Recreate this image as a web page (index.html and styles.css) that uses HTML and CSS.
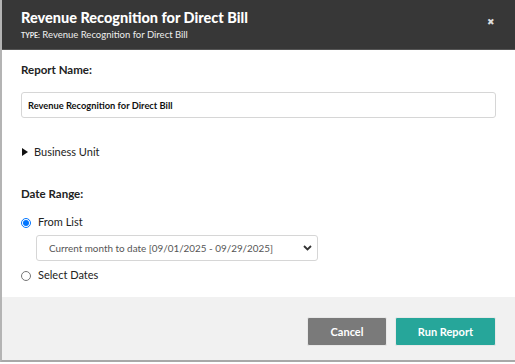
FILE: index.html
```html
<!DOCTYPE html>
<html lang="en">
<head>
    <meta charset="UTF-8">
    <meta name="viewport" content="width=device-width, initial-scale=1.0">
    <title>Revenue Recognition for Direct Bill</title>
    <link rel="stylesheet" href="styles.css">
</head>
<body>
    <div class="dialog">
        <div class="dialog-header">
            <div class="titles">
                <div class="title">Revenue Recognition for Direct Bill</div>
                <div class="subtitle"><span class="type">TYPE:</span> Revenue Recognition for Direct Bill</div>
            </div>
            <span class="close-btn">&#x2716;</span>
        </div>

        <div class="dialog-body">
            <label class="label" for="reportName">Report Name:</label>
            <input type="text" id="reportName" class="text-input" value="Revenue Recognition for Direct Bill">

            <div class="toggle">
                <svg class="caret" width="6" height="8" viewBox="0 0 6 8"><path d="M0 0 L6 4 L0 8 Z" fill="#111"/></svg>
                <span>Business Unit</span>
            </div>

            <div class="label">Date Range:</div>

            <div class="radio-row">
                <input type="radio" id="fromList" name="range" checked>
                <label for="fromList">From List</label>
            </div>
            <div class="select-wrap">
                <select class="select">
                    <option>Current month to date [09/01/2025 - 09/29/2025]</option>
                </select>
                <svg class="chevron" width="9" height="6" viewBox="0 0 9 6"><path d="M1 1 L4.5 4.5 L8 1" fill="none" stroke="#333" stroke-width="1.8"/></svg>
            </div>
            <div class="radio-row">
                <input type="radio" id="selectDates" name="range">
                <label for="selectDates">Select Dates</label>
            </div>
        </div>

        <div class="dialog-footer">
            <button class="button cancel">Cancel</button>
            <button class="button run">Run Report</button>
        </div>
    </div>
</body>
</html>
```

FILE: styles.css
```css
body {
    margin: 0;
    font-family: Lato, "Noto Sans", sans-serif;
    background: #fff;
}
.dialog {
    width: 513px;
    height: 360px;
    border-left: 2px solid #b4b4b4;
    border-bottom: 2px solid #a8a8a8;
    display: flex;
    flex-direction: column;
}
.dialog-header {
    background-color: #373737;
    color: #fff;
    height: 50px;
    box-sizing: border-box;
    padding: 9px 20px 0 19px;
    display: flex;
    justify-content: space-between;
    border-bottom: 1px solid #555;
}
.title {
    font-size: 14.5px;
    font-weight: 900;
    line-height: 18px;
}
.subtitle {
    font-size: 9.5px;
    line-height: 12px;
    margin-top: 2px;
    color: #eee;
}
.type {
    font-weight: bold;
    font-size: 7px;
}
.close-btn {
    font-size: 9px;
    color: #ddd;
    margin-top: 7px;
}
.dialog-body {
    flex: 1;
    padding: 12px 19px 0 19px;
}
.label {
    display: block;
    font-size: 11.5px;
    font-weight: bold;
    color: #222;
    line-height: 16px;
}
.text-input {
    display: block;
    width: 475px;
    height: 26px;
    box-sizing: border-box;
    margin: 14px 0 0 0;
    padding: 0 6px;
    border: 1px solid #d6d6d6;
    border-radius: 3px;
    font-family: inherit;
    font-size: 9.3px;
    font-weight: bold;
    color: #111;
}
.toggle {
    display: flex;
    align-items: center;
    gap: 6px;
    margin: 26px 0 0 1px;
    font-size: 11px;
    color: #222;
    line-height: 16px;
}
.toggle + .label {
    margin-top: 26px;
}
.radio-row {
    display: flex;
    align-items: center;
    gap: 7px;
    font-size: 11px;
    color: #222;
    line-height: 16px;
}
.radio-row input {
    margin: 2px 0 0 0;
    width: 10px;
    height: 10px;
}
.label + .radio-row {
    margin-top: 12px;
}
.select-wrap {
    position: relative;
    margin: 5px 0 6px 15px;
    width: 282px;
}
.select {
    display: block;
    width: 282px;
    height: 26px;
    border: 1px solid #d6d6d6;
    border-radius: 3px;
    background: #fff;
    appearance: none;
    padding: 0 12px;
    font-family: inherit;
    font-size: 9.9px;
    color: #555;
}
.chevron {
    position: absolute;
    right: 6px;
    top: 10px;
}
.dialog-footer {
    height: 63px;
    background-color: #f1f1f1;
    display: flex;
    justify-content: flex-end;
    align-items: flex-start;
    gap: 8px;
    padding: 20px 19px 0 0;
    box-sizing: border-box;
}
.button {
    height: 29px;
    border: 1px solid #e8e8e8;
    border-radius: 2px;
    color: #fff;
    font-family: inherit;
    font-size: 11px;
    font-weight: bold;
}
.cancel {
    width: 80px;
    background-color: #7a7a7a;
}
.run {
    width: 101px;
    background-color: #26a69a;
}
```
